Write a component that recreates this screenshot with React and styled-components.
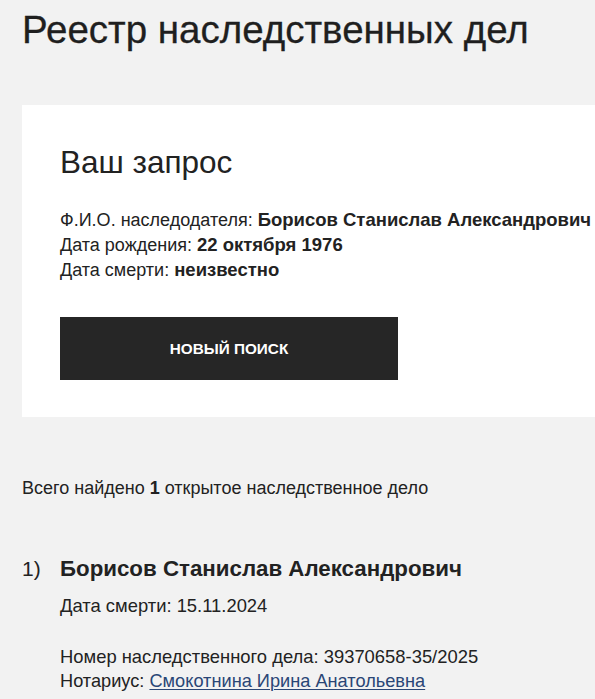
import React from "react";
import styled, { createGlobalStyle } from "styled-components";

const Global = createGlobalStyle`
  html, body { margin: 0; padding: 0; background: #f2f2f2; }
  body {
    font-family: "Liberation Sans", Arial, Helvetica, sans-serif;
    color: #222;
    overflow: hidden;
  }
`;

const Page = styled.div`
  padding: 7px 0 0 22px;
`;

const Title = styled.h1`
  margin: 0;
  font-size: 38.5px;
  line-height: 46px;
  font-weight: 400;
  color: #1f1f1f;
  white-space: nowrap;
  -webkit-text-stroke: 0.3px #1f1f1f;
`;

const Card = styled.section`
  margin-top: 52px;
  background: #fff;
  padding: 38px 0 37px 38px;
`;

const CardTitle = styled.h2`
  margin: 0;
  font-size: 31.5px;
  line-height: 38px;
  font-weight: 400;
  color: #222;
`;

const InfoList = styled.div`
  margin-top: 27px;
  display: flex;
  flex-direction: column;
`;

const Line = styled.div`
  font-size: ${(p) => p.$size || 18}px;
  line-height: 25px;
  height: 25px;
  color: #222;
  white-space: nowrap;
  b { font-weight: 700; font-size: 18.5px; line-height: 1; }
`;

const Button = styled.button`
  margin-top: 34px;
  width: 338px;
  height: 63px;
  padding: 0;
  background: #262626;
  color: #fff;
  border: none;
  font-family: inherit;
  font-size: 15.3px;
  font-weight: 700;
  text-transform: uppercase;
  cursor: pointer;
  display: block;
`;

const Summary = styled(Line)`
  margin-top: 59px;
  b { font-size: 18px; }
`;

const Item = styled.div`
  margin-top: 55px;
  display: grid;
  grid-template-columns: 38px 1fr;
`;

const Num = styled.div`
  font-size: 21px;
  line-height: 26px;
  color: #222;
`;

const ItemBody = styled.div`
  display: flex;
  flex-direction: column;
`;

const ItemName = styled.div`
  font-size: 22.3px;
  line-height: 26px;
  font-weight: 700;
  color: #222;
`;

const Group = styled.div`
  margin-top: ${(p) => p.$gap}px;
  display: flex;
  flex-direction: column;
`;

const Link = styled.a`
  color: #2a4676;
  text-decoration: underline;
  text-underline-offset: 2px;
  text-decoration-thickness: 1px;
`;

export default function App() {
  return (
    <>
      <Global />
      <Page>
        <Title>Реестр наследственных дел</Title>
        <Card>
          <CardTitle>Ваш запрос</CardTitle>
          <InfoList>
            <Line>
              Ф.И.О. наследодателя: <b>Борисов Станислав Александрович</b>
            </Line>
            <Line>
              Дата рождения: <b>22 октября 1976</b>
            </Line>
            <Line>
              Дата смерти: <b>неизвестно</b>
            </Line>
          </InfoList>
          <Button>Новый поиск</Button>
        </Card>
        <Summary>
          Всего найдено <b>1</b> открытое наследственное дело
        </Summary>
        <Item>
          <Num>1)</Num>
          <ItemBody>
            <ItemName>Борисов Станислав Александрович</ItemName>
            <Group $gap={11}>
              <Line $size={18.4}>Дата смерти: 15.11.2024</Line>
            </Group>
            <Group $gap={26}>
              <Line $size={18.4}>Номер наследственного дела: 39370658-35/2025</Line>
              <Line $size={18.2}>
                Нотариус: <Link href="#">Смокотнина Ирина Анатольевна</Link>
              </Line>
            </Group>
          </ItemBody>
        </Item>
      </Page>
    </>
  );
}
